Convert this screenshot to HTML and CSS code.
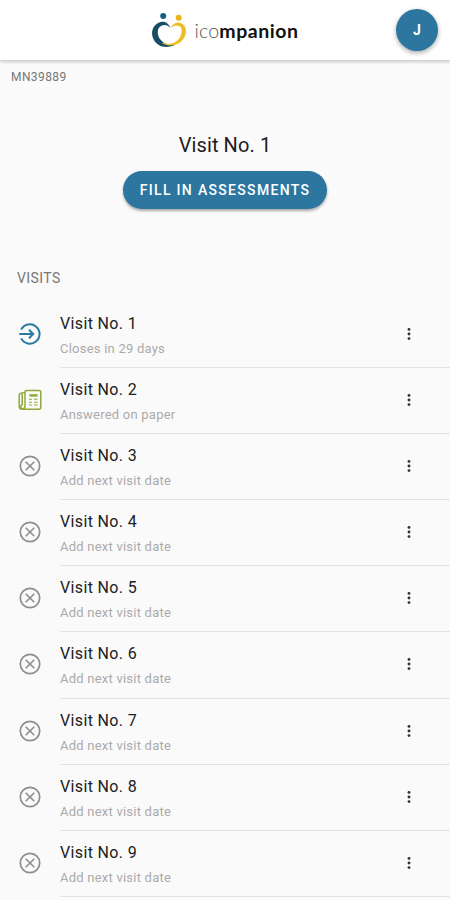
FILE: index.html
```html
<!DOCTYPE html>
<html lang="en">
<head>
<meta charset="utf-8">
<meta name="viewport" content="width=device-width, initial-scale=1">
<title>icompanion</title>
<link rel="stylesheet" href="styles.css">
</head>
<body>
<svg class="defs" aria-hidden="true">
  <symbol id="enter" viewBox="0 0 24 24"><path d="M3.200 7.600A9.700 9.700 0 1 1 3.200 16.400M1.300 12H15M11 7.800l4.200 4.200-4.200 4.200" fill="none" stroke="currentColor" stroke-width="2"/></symbol>
  <symbol id="paper" viewBox="0 0 24 24"><path d="M7 19.500V4.200Q7 2.500 8.800 2.500H21Q22.800 2.500 22.800 4.200V19.300Q22.800 21.200 21 21.200H4Q1.200 21.200 1.200 18.500V7.500Q1.200 5.800 3 5.300L7 4.200M4.200 6V16.500M7 17.500Q7 21 4.200 21Q2.800 20.500 2.800 18.500Q3 16.500 5 16.500" fill="none" stroke="currentColor" stroke-width="1.500"/><path d="M11.500 7.400H19.500" stroke="currentColor" stroke-width="2.500"/><path d="M11 11.300H14M16 11.300H19.500M11 14.200H14M16 14.200H19.500M11 17H14M16 17H19.500" stroke="currentColor" stroke-width="1.100"/></symbol>
  <symbol id="closed" viewBox="0 0 24 24"><circle cx="12" cy="12" r="9.700" fill="none" stroke="currentColor" stroke-width="1.700"/><path d="M7.700 7.700l8.600 8.600M16.300 7.700l-8.600 8.600" stroke="currentColor" stroke-width="1.600"/></symbol>
  <symbol id="more" viewBox="0 0 6 14"><circle cx="3" cy="2.400" r="1.450"/><circle cx="3" cy="7" r="1.450"/><circle cx="3" cy="11.600" r="1.450"/></symbol>
</svg>
<header class="topbar">
  <div class="brand">
    <svg class="logo" viewBox="0 0 36 36">
      <circle cx="12.200" cy="4" r="3" fill="#15607c"/>
      <circle cx="27.700" cy="5.800" r="3" fill="#e8b51c"/>
      <path d="M19.500 16C17 9.800 12 8.500 7.500 10.700C.8 14.200-.5 22 2.800 27.700C6.500 34.500 14.500 37 24 33C16 33.500 9.500 30 7.500 24.300C5.800 19.500 7 15.200 10.500 13.700C14 12.400 17 13.300 19.500 16Z" fill="#164f65"/>
      <path d="M19.200 16C22.200 11.200 26 9.500 30.300 11.200C36 14 36.500 22 32 27.500C28 32.800 21.500 34.800 15 32.300C21 32.500 26.300 30 28.800 25.500C31 21 31.700 15.800 28.500 14.200C25.500 12.700 22.300 13.700 19.200 16Z" fill="#edbd24"/>
      <path d="M11.500 31Q16.500 33.700 22 32.200" fill="none" stroke="#edbd24" stroke-width="1.300"/>
    </svg>
    <span class="wordmark"><span class="light">ico</span><b>mpanion</b></span>
  </div>
  <button class="avatar">J</button>
</header>
<div class="patient">MN39889</div>
<section class="current">
  <h1>Visit No. 1</h1>
  <button class="fill">FILL IN ASSESSMENTS</button>
</section>
<h2>VISITS</h2>
<ul class="visits">
  <li><svg class="status enter"><use href="#enter"/></svg><div class="body"><div><p class="name">Visit No. 1</p><p class="note">Closes in 29 days</p></div><svg class="more"><use href="#more"/></svg></div></li>
  <li><svg class="status paper"><use href="#paper"/></svg><div class="body"><div><p class="name">Visit No. 2</p><p class="note">Answered on paper</p></div><svg class="more"><use href="#more"/></svg></div></li>
  <li><svg class="status"><use href="#closed"/></svg><div class="body"><div><p class="name">Visit No. 3</p><p class="note">Add next visit date</p></div><svg class="more"><use href="#more"/></svg></div></li>
  <li><svg class="status"><use href="#closed"/></svg><div class="body"><div><p class="name">Visit No. 4</p><p class="note">Add next visit date</p></div><svg class="more"><use href="#more"/></svg></div></li>
  <li><svg class="status"><use href="#closed"/></svg><div class="body"><div><p class="name">Visit No. 5</p><p class="note">Add next visit date</p></div><svg class="more"><use href="#more"/></svg></div></li>
  <li><svg class="status"><use href="#closed"/></svg><div class="body"><div><p class="name">Visit No. 6</p><p class="note">Add next visit date</p></div><svg class="more"><use href="#more"/></svg></div></li>
  <li><svg class="status"><use href="#closed"/></svg><div class="body"><div><p class="name">Visit No. 7</p><p class="note">Add next visit date</p></div><svg class="more"><use href="#more"/></svg></div></li>
  <li><svg class="status"><use href="#closed"/></svg><div class="body"><div><p class="name">Visit No. 8</p><p class="note">Add next visit date</p></div><svg class="more"><use href="#more"/></svg></div></li>
  <li><svg class="status"><use href="#closed"/></svg><div class="body"><div><p class="name">Visit No. 9</p><p class="note">Add next visit date</p></div><svg class="more"><use href="#more"/></svg></div></li>
</ul>
</body>
</html>
```
FILE: styles.css
```css
* { box-sizing: border-box; margin: 0; padding: 0; }
body { height: 900px; overflow: hidden; background: #fafafa; color: #202020; font-family: Roboto, sans-serif; }
button { border: 0; font-family: inherit; color: #fff; background: #2c769f; }
.defs { display: none; }
.topbar { height: 61px; background: #fff; border-bottom: 1px solid #d5d5d5; box-shadow: 0 1px 3px #0003; display: grid; grid-template-columns: 1fr auto 1fr; align-items: center; }
.brand { grid-column: 2; display: flex; align-items: center; gap: 7px; }
.logo { width: 36px; height: 36px; margin-top: -1px; }
.wordmark { font-family: Lato, sans-serif; font-size: 19.5px; line-height: 24px; letter-spacing: .55px; color: #111; padding-top: 2px; }
.light { font-weight: 300; color: #555; letter-spacing: .2px; }
.wordmark b { font-weight: 700; }
.avatar { justify-self: end; margin-right: 12px; width: 42px; height: 42px; border-radius: 50%; font-size: 14px; font-weight: 700; box-shadow: 0 2px 5px #0005; }
.patient { padding: 9px 11px 0; height: 73px; font-size: 12px; line-height: 14px; letter-spacing: .4px; color: #777; }
.current { display: flex; flex-direction: column; align-items: center; }
h1 { font-size: 20px; line-height: 24px; font-weight: 400; letter-spacing: .1px; margin-top: -1px; }
.fill { width: 204px; height: 38px; margin-top: 14px; border-radius: 19px; font-size: 14px; font-weight: 500; letter-spacing: 1.32px; box-shadow: 0 2px 3px #0005; white-space: nowrap; }
h2 { font-size: 14px; line-height: 18px; font-weight: 400; letter-spacing: .4px; color: #777; margin: 60px 0 0 17px; }
.visits { list-style: none; margin-top: 15px; }
li { height: 66.1px; display: flex; }
.status { width: 24px; height: 24px; margin: 20px 12px 0 18px; color: #8b8e92; flex: none; }
.enter { color: #2878a0; }
.paper { color: #91aa38; }
.body { flex: 1; margin-left: 6px; border-bottom: 1.5px solid #e3e3e3; display: flex; justify-content: space-between; padding: 12px 38px 0 0; }
.name { font-size: 16px; line-height: 20px; letter-spacing: .35px; }
.note { font-size: 13px; line-height: 18px; margin-top: 6px; letter-spacing: .23px; color: #aaa; }
.more { width: 6px; height: 14px; margin-top: 13px; fill: #333; }
```
